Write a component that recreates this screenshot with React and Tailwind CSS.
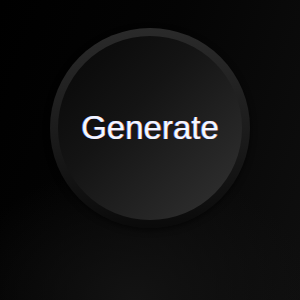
import React from "react";

const App = () => {
  return (
    <div className="w-[300px] h-[300px] overflow-hidden bg-[radial-gradient(ellipse_60%_45%_at_45%_100%,#131313,transparent),linear-gradient(110deg,#000_0%,#040404_45%,#0f0f0f_100%)]">
      {/* Generate button */}
      <div className="pt-[28px] flex justify-center">
        <div className="w-[200px] h-[200px] rounded-full p-[8px] bg-[linear-gradient(to_bottom,#2a2a2a,#1c1c1c_50%,#0a0a0a)] shadow-[0_2px_6px_rgba(0,0,0,0.6)]">
          <button className="w-full h-full rounded-full flex items-center justify-center bg-[linear-gradient(135deg,#080808_5%,#141414_40%,#262626_75%,#333_100%)]">
            <span className="text-[33px] leading-none text-[#f4f6ff] font-['Liberation_Sans',Arial,sans-serif] [text-shadow:-0.6px_0_rgba(90,140,255,0.9),0.6px_0_rgba(255,130,60,0.8)] -mt-[1px]">
              Generate
            </span>
          </button>
        </div>
      </div>
    </div>
  );
};

export default App;
